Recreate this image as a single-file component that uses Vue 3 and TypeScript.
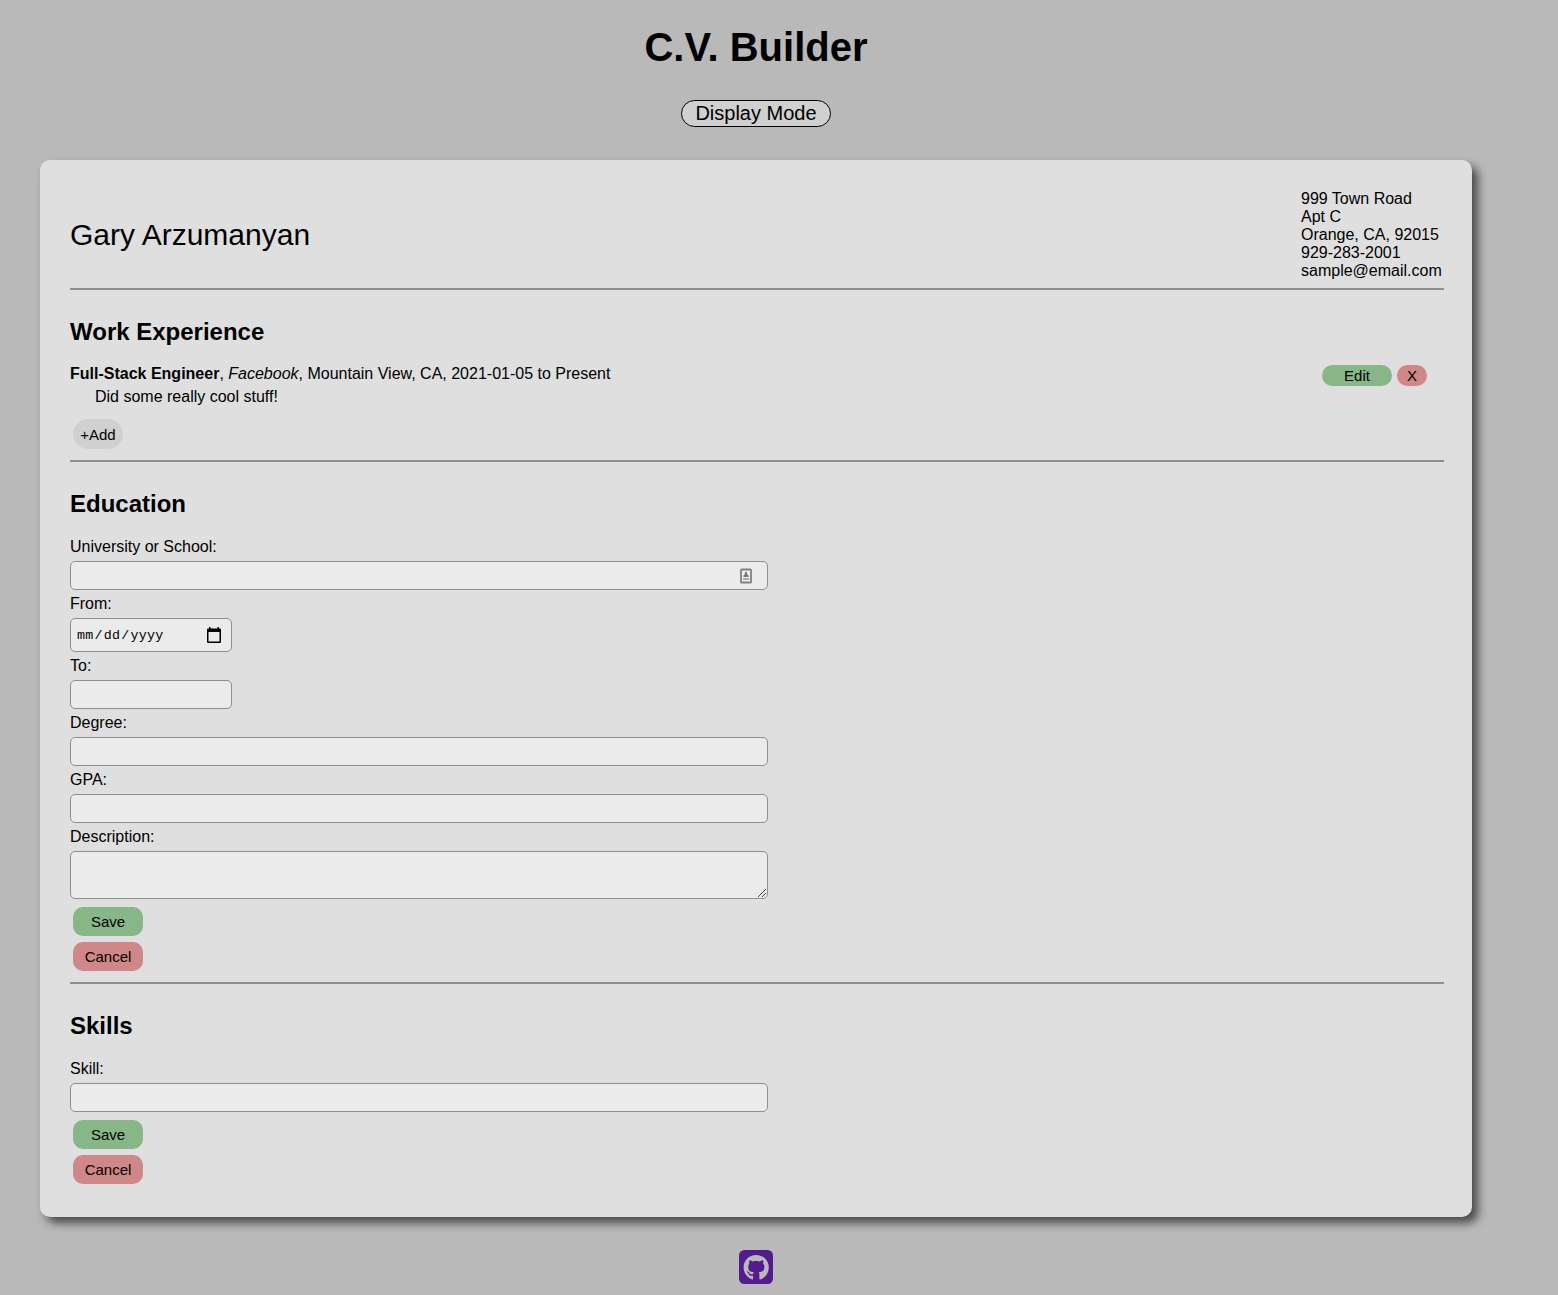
<script setup lang="ts">
interface Field {
  label: string
  kind: 'text' | 'date' | 'short' | 'area'
  badge?: boolean
}

const address: string[] = ['999 Town Road', 'Apt C', 'Orange, CA, 92015', '929-283-2001', 'sample@email.com']

const educationFields: Field[] = [
  { label: 'University or School:', kind: 'text', badge: true },
  { label: 'From:', kind: 'date' },
  { label: 'To:', kind: 'short' },
  { label: 'Degree:', kind: 'text' },
  { label: 'GPA:', kind: 'text' },
  { label: 'Description:', kind: 'area' },
]
const skillFields: Field[] = [{ label: 'Skill:', kind: 'text' }]

const forms = [
  { title: 'Education', fields: educationFields },
  { title: 'Skills', fields: skillFields },
]
</script>

<template>
  <div class="page">
    <h1>C.V. Builder</h1>
    <button class="mode">Display Mode</button>

    <main class="card">
      <header class="personal">
        <div class="name">Gary Arzumanyan</div>
        <div class="address">
          <div v-for="line in address" :key="line">{{ line }}</div>
        </div>
      </header>

      <section class="work">
        <h2>Work Experience</h2>
        <div class="job">
          <div>
            <div class="job-line"><b>Full-Stack Engineer</b>, <i>Facebook</i>, Mountain View, CA, 2021-01-05 to Present</div>
            <div class="job-desc">Did some really cool stuff!</div>
          </div>
          <div class="job-actions">
            <button class="edit">Edit</button>
            <button class="remove">X</button>
          </div>
        </div>
        <button class="add">+Add</button>
      </section>

      <section v-for="form in forms" :key="form.title" class="form">
        <h2>{{ form.title }}</h2>
        <div v-for="field in form.fields" :key="field.label">
          <label>{{ field.label }}</label>
          <div class="input" :class="field.kind">
            <template v-if="field.kind === 'date'">
              <span class="date-text"><span>mm</span>/<span>dd</span>/<span>yyyy</span></span>
              <svg class="calendar" width="16" height="16" viewBox="0 0 16 16">
                <path d="M3 0h1.500v1.500h7V0H13v1.500h1q1 0 1 1V14.500q0 1.500-1 1.500H2q-1 0-1-1.500V2.500q0-1 1-1h1zM2.500 5v9.500h11V5z" fill="#000" fill-rule="evenodd" />
              </svg>
            </template>
            <svg v-if="field.badge" class="badge" width="12" height="16" viewBox="0 0 12 16">
              <rect x="1" y="1.500" width="10" height="13" rx="0.600" fill="#f0f0f0" stroke="#808080" stroke-width="1.800" />
              <circle cx="6" cy="5" r="1.200" fill="#777" />
              <path d="M3.500 9V7.500L5 6h2l1.500 1.500V9z" fill="#777" />
              <path d="M3 11h6" stroke="#aaa" stroke-width="2" />
            </svg>
            <svg v-if="field.kind === 'area'" class="grip" width="10" height="10" viewBox="0 0 10 10">
              <path d="M1 9L9 1M5 9L9 5" stroke="#444" fill="none" />
            </svg>
          </div>
        </div>
        <button class="save">Save</button>
        <button class="cancel">Cancel</button>
      </section>
    </main>

    <svg class="github" width="34.400" height="34.400" viewBox="0 32 448 448">
      <path fill="#551a8b" d="M400 32H48C21.500 32 0 53.500 0 80v352c0 26.500 21.500 48 48 48h352c26.500 0 48-21.500 48-48V80c0-26.500-21.500-48-48-48zM277.300 415.700c-8.400 1.500-11.500-3.700-11.500-8 0-5.400.2-33 .2-55.300 0-15.600-5.200-25.500-11.300-30.700 37-4.100 76-9.200 76-73.100 0-18.200-6.500-27.300-17.100-39 1.700-4.300 7.400-22-1.700-45-13.900-4.300-45.700 17.900-45.700 17.900-13.200-3.700-27.500-5.600-41.600-5.600-14.100 0-28.400 1.900-41.600 5.600 0 0-31.800-22.200-45.700-17.900-9.100 22.900-3.500 40.600-1.700 45-10.600 11.700-15.600 20.800-15.600 39 0 63.600 37.300 69 74.300 73.100-4.800 4.300-9.100 11.700-10.600 22.300-9.500 4.300-33.800 11.700-48.300-13.900-9.100-15.800-25.500-17.100-25.500-17.100-16.200-.2-1.100 10.200-1.100 10.200 10.800 5 18.400 24.200 18.400 24.200 9.700 29.700 56.100 19.700 56.100 19.700 0 13.900.2 36.500.2 40.600 0 4.300-3 9.500-11.500 8-66-22.100-112.200-84.900-112.200-158.300 0-91.800 70.200-161.500 162-161.500S388 165.600 388 257.400c.1 73.400-44.700 136.300-110.700 158.300z" />
    </svg>
  </div>
</template>

<style>
body {
  margin: 0;
  background: #b9b9b9;
}
</style>

<style scoped>
.page {
  width: 1558px;
  height: 1295px;
  box-sizing: border-box;
  padding: 24px 86px 0 40px;
  display: flex;
  flex-direction: column;
  align-items: center;
  overflow: hidden;
  font: 16px/18px "Liberation Sans", Arial, sans-serif;
  color: #000;
}
h1 {
  margin: 0;
  font-size: 40px;
  line-height: 46px;
}
button {
  display: block;
  margin: 0;
  padding: 0;
  border: 0;
  font: 15px/17px "Liberation Sans", Arial, sans-serif;
  color: #000;
}
.mode {
  box-sizing: border-box;
  flex: none;
  width: 150px;
  height: 27px;
  margin-top: 30px;
  border: 1px solid #000;
  border-radius: 14px;
  background: #d0d0d0;
  font-size: 20px;
  line-height: 23px;
}
.card {
  box-sizing: border-box;
  flex: none;
  width: 1432px;
  height: 1057px;
  margin-top: 33px;
  padding: 30px 28px 0 30px;
  border-radius: 10px;
  background: #dfdfdf;
  box-shadow: 6px 6px 10px #4a4a4a;
}
.personal {
  display: flex;
  align-items: center;
  justify-content: space-between;
  height: 98px;
  border-bottom: 2px solid #8f8f8f;
}
.name {
  font-size: 30px;
  line-height: 34px;
  margin-top: -8px;
}
.address {
  width: 143px;
  margin-top: -8px;
}
h2 {
  margin: 0;
  padding-top: 28px;
  font-size: 24px;
  line-height: 28px;
}
.work {
  height: 170px;
  border-bottom: 2px solid #8f8f8f;
}
.job {
  display: flex;
  justify-content: space-between;
  padding: 19px 17px 0 0;
}
.job-desc {
  margin: 5px 0 0 25px;
}
.job-actions {
  display: flex;
  gap: 5px;
}
.edit,
.remove {
  height: 21px;
  border-radius: 11px;
}
.edit {
  width: 70px;
}
.remove {
  width: 30px;
}
.edit,
.save {
  background: #87b687;
}
.remove,
.cancel {
  background: #cf8787;
}
.add {
  width: 50px;
  height: 30px;
  margin: 13px 0 0 3px;
  border-radius: 15px;
  background: #d0d0d0;
}
.form {
  height: 520px;
  border-bottom: 2px solid #8f8f8f;
}
.form:last-child {
  height: auto;
  border: 0;
}
.form h2 {
  margin-bottom: 15px;
}
label {
  display: block;
  height: 28px;
  line-height: 27px;
}
.input {
  box-sizing: border-box;
  display: flex;
  align-items: center;
  justify-content: space-between;
  width: 698px;
  height: 29px;
  padding: 0 6px;
  border: 1px solid #8f8f8f;
  border-radius: 5px;
  background: #ebebeb;
}
.input.date {
  width: 162px;
  height: 34px;
  padding-right: 9px;
}
.input.short {
  width: 162px;
}
.input.area {
  height: 48px;
  align-items: flex-end;
  padding: 0;
}
.date-text {
  font: 13.333px/17px "Liberation Mono", monospace;
  letter-spacing: 0.25px;
}
.date-text span {
  padding: 0 1px;
}
.date-text > span:first-child {
  padding-left: 0;
}
.calendar {
  margin-top: -1px;
}
.badge {
  margin: 0 9px 0 auto;
}
.grip {
  margin-left: auto;
}
.save,
.cancel {
  width: 70px;
  height: 29px;
  margin: 6px 0 0 3px;
  border-radius: 10px;
}
.save {
  margin-top: 8px;
}
.github {
  flex: none;
  margin-top: 32.500px;
  border-radius: 5.500px;
}
</style>
